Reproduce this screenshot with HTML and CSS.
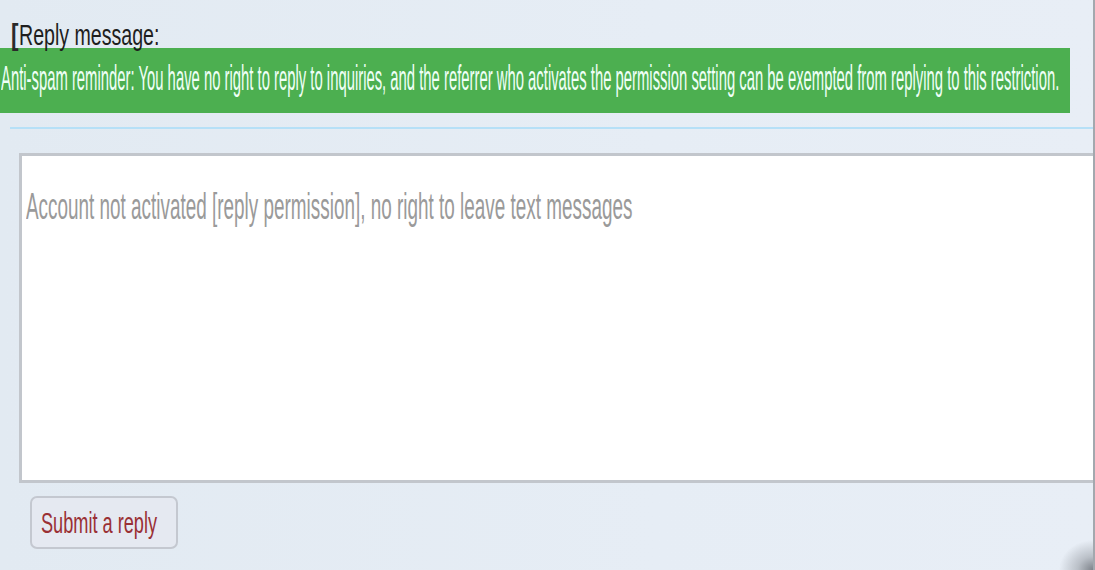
FILE: index.html
```html
<!DOCTYPE html>
<html lang="en">
<head>
<meta charset="utf-8">
<title>Reply message</title>
<link rel="stylesheet" href="styles.css">
</head>
<body>
<div class="page">
  <div class="title"><span class="bracket">[</span><span class="title-text">Reply message:</span></div>
  <div class="notice"><span class="notice-text">Anti-spam reminder: You have no right to reply to inquiries, and the referrer who activates the permission setting can be exempted from replying to this restriction.</span></div>
  <div class="sep"></div>
  <div class="editor" role="textbox" aria-disabled="true"><span class="placeholder">Account not activated [reply permission], no right to leave text messages</span></div>
  <button class="submit" type="button"><span class="submit-text">Submit a reply</span></button>
</div>
</body>
</html>
```
FILE: styles.css
```css
html, body {
  margin: 0;
  padding: 0;
  overflow: hidden;
}
body {
  font-family: "Liberation Sans", Arial, sans-serif;
  background: #e4ecf4;
}
.page {
  width: 1095px;
  height: 570px;
  box-sizing: border-box;
  border-right: 2px solid #a3a8ae;
  overflow: hidden;
  background:
    radial-gradient(ellipse 34px 30px at 100% 100%, rgba(80,85,92,0.7) 0, rgba(80,85,92,0.3) 45%, rgba(80,85,92,0) 100%),
    linear-gradient(90deg, #e2eaf2 0%, #e6edf5 60%, #e8eef6 100%);
}
.title {
  height: 48px;
  box-sizing: border-box;
  padding: 19px 0 0 11px;
  line-height: 32px;
  font-size: 30px;
  color: #1e1e1e;
  white-space: nowrap;
  display: flex;
}
.bracket {
  display: inline-block;
  font-weight: bold;
  color: #2a2a2a;
  transform: scaleX(0.75);
  transform-origin: left center;
  width: 8px;
}
.title-text {
  display: inline-block;
  transform: scaleX(0.653);
  transform-origin: left center;
}
.notice {
  width: 1070px;
  height: 65px;
  box-sizing: border-box;
  padding-bottom: 5px;
  line-height: 60px;
  background: #4caf50;
  color: #effff7;
  font-size: 35px;
  white-space: nowrap;
  overflow: hidden;
}
.notice-text {
  display: inline-block;
  transform: scaleX(0.424);
  transform-origin: left center;
  margin-left: 1px;
}
.sep {
  margin: 14px 0 0 10px;
  height: 2px;
  background: #b6e0f7;
}
.editor {
  margin: 24px 0 0 19px;
  width: 1100px;
  height: 330px;
  box-sizing: border-box;
  border: 3px solid #c2c6cc;
  background: #fff;
  padding: 29px 0 0 4px;
  line-height: 44px;
  font-size: 37px;
  color: #9a9a9a;
  white-space: nowrap;
}
.placeholder {
  display: inline-block;
  transform: scaleX(0.511);
  transform-origin: left center;
}
.submit {
  display: block;
  margin: 13px 0 0 30px;
  width: 148px;
  height: 53px;
  box-sizing: border-box;
  padding: 0 0 0 9px;
  border: 2px solid #c4c8d0;
  border-radius: 7px;
  background: #e5e9f1;
  font-family: "Liberation Sans", Arial, sans-serif;
  font-size: 30px;
  line-height: 34px;
  color: #9a3035;
  text-align: left;
  white-space: nowrap;
}
.submit-text {
  display: inline-block;
  transform: scaleX(0.605);
  transform-origin: left center;
}
```
